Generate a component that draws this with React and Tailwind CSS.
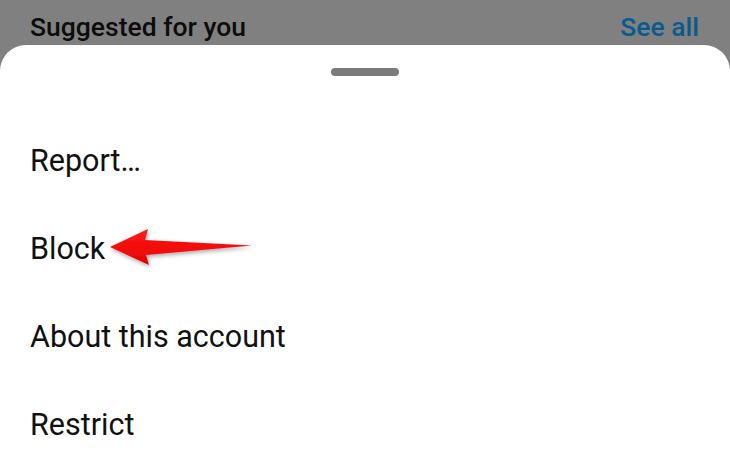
export default function App() {
  const items = ["Report…", "Block", "About this account", "Restrict"];
  return (
    <div
      className="w-[730px] h-[456px] bg-[#808080] overflow-hidden flex flex-col"
      style={{ fontFamily: "Roboto, 'Liberation Sans', sans-serif" }}
    >
      <div className="h-[45px] flex items-start justify-between pl-[30px] pr-[31px] pt-[9px]">
        <span className="text-[26.5px] leading-[36px] font-medium text-[#0c0c0c]">Suggested for you</span>
        <span className="text-[26.5px] leading-[36px] font-medium text-[#0b5a8e]">See all</span>
      </div>
      <div className="flex-1 bg-white rounded-t-[26px] relative flex flex-col">
        <div className="mt-[23px] mx-auto w-[68px] h-[8px] rounded-full bg-[#7b7b7b]" />
        <div className="mt-[41px] flex flex-col">
          {items.map((t) => (
            <div key={t} className="h-[88px] flex items-center pl-[30px] text-[30.5px] text-[#111]">
              {t}
            </div>
          ))}
        </div>
        <svg
          className="absolute left-[100px] top-[176px]"
          width="170"
          height="50"
          viewBox="100 221 170 50"
        >
          <defs>
            <filter id="sh" x="-20%" y="-40%" width="140%" height="180%">
              <feDropShadow dx="1" dy="2" stdDeviation="2" floodColor="#000" floodOpacity="0.35" />
            </filter>
            <linearGradient id="g" x1="0" y1="0" x2="0" y2="1">
              <stop offset="0" stopColor="#ff1a1a" />
              <stop offset="1" stopColor="#e60000" />
            </linearGradient>
          </defs>
          <path
            d="M110 247 L148 229 L145 240 L252 245.5 L146 255 L149 265 Z"
            fill="url(#g)"
            filter="url(#sh)"
          />
        </svg>
      </div>
    </div>
  );
}
